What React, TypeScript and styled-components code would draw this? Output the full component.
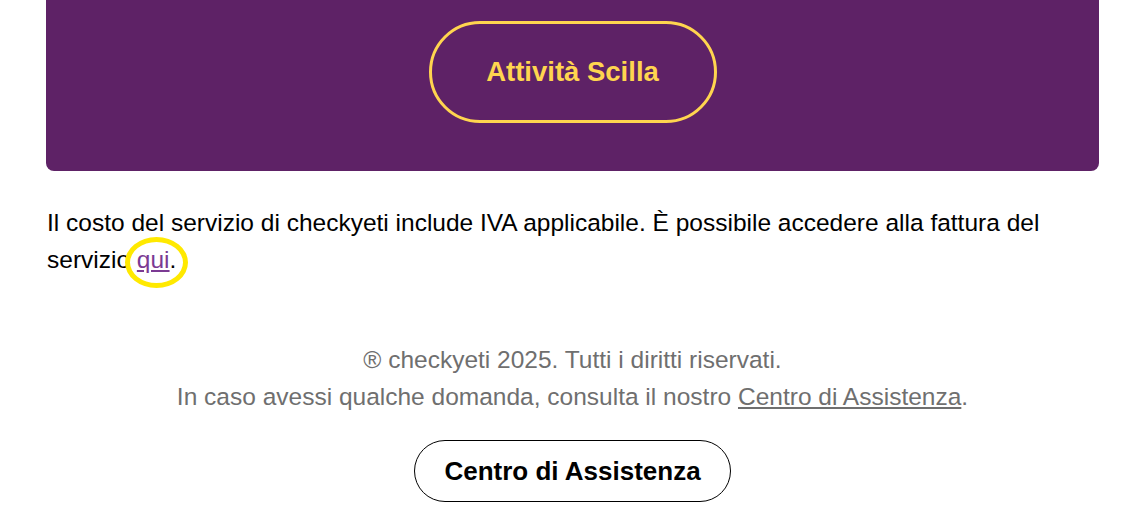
import React from "react";
import styled, { createGlobalStyle } from "styled-components";

const Global = createGlobalStyle`
  html, body { margin: 0; padding: 0; background: #ffffff; }
  body { font-family: "Liberation Sans", Arial, Helvetica, sans-serif; }
`;

const Page = styled.div`
  width: 1053px;
  margin-left: 46px;
  display: flex;
  flex-direction: column;
`;

const Hero = styled.section`
  background: #5e2266;
  border-radius: 0 0 8px 8px;
  height: 171px;
  box-sizing: border-box;
  padding-top: 21px;
  display: flex;
  justify-content: center;
  align-items: flex-start;
`;

const PillButton = styled.a<{ $variant: "gold" | "dark" }>`
  box-sizing: border-box;
  display: inline-flex;
  align-items: center;
  justify-content: center;
  text-decoration: none;
  font-family: "Liberation Sans", Arial, sans-serif;
  font-weight: 700;
  border-radius: 999px;
  ${(p) =>
    p.$variant === "gold"
      ? `
    width: 288px; height: 102px; border: 3px solid #ffd54f; color: #ffd54f; font-size: 27.5px;
  `
      : `
    width: 317px; height: 62px; border: 1px solid #000; color: #000; font-size: 26px;
  `}
`;

const Paragraph = styled.p`
  margin: 33px 0 0 1px;
  font-family: "Liberation Sans", Arial, sans-serif;
  font-size: 24.5px;
  line-height: 37px;
  color: #000;
`;

const Circled = styled.span`
  position: relative;
  display: inline-block;
  &::before {
    content: "";
    position: absolute;
    left: -12px;
    top: -4px;
    width: 63px;
    height: 51px;
    box-sizing: border-box;
    border: 5px solid #ffe900;
    border-radius: 50%;
  }
`;

const InlineLink = styled.a<{ $tone: "purple" | "gray" }>`
  color: ${(p) => (p.$tone === "purple" ? "#7b3a93" : "#6f6f6f")};
  text-decoration: underline;
`;

const Footer = styled.footer`
  margin-top: 63px;
  display: flex;
  flex-direction: column;
  align-items: center;
  font-family: "Liberation Sans", Arial, sans-serif;
  font-size: 24.5px;
  line-height: 37px;
  color: #6f6f6f;
  text-align: center;
`;

const FooterLine = styled.div``;

const FooterAction = styled.div`
  margin-top: 25px;
  display: flex;
  justify-content: center;
`;

export default function App() {
  return (
    <>
      <Global />
      <Page>
        <Hero>
          <PillButton $variant="gold" href="#">Attività Scilla</PillButton>
        </Hero>
        <Paragraph>
          Il costo del servizio di checkyeti include IVA applicabile. È possibile accedere alla fattura del servizio{" "}
          <Circled>
            <InlineLink $tone="purple" href="#">qui</InlineLink>
          </Circled>
          .
        </Paragraph>
        <Footer>
          <FooterLine>® checkyeti 2025. Tutti i diritti riservati.</FooterLine>
          <FooterLine>
            In caso avessi qualche domanda, consulta il nostro{" "}
            <InlineLink $tone="gray" href="#">Centro di Assistenza</InlineLink>.
          </FooterLine>
          <FooterAction>
            <PillButton $variant="dark" href="#">Centro di Assistenza</PillButton>
          </FooterAction>
        </Footer>
      </Page>
    </>
  );
}
